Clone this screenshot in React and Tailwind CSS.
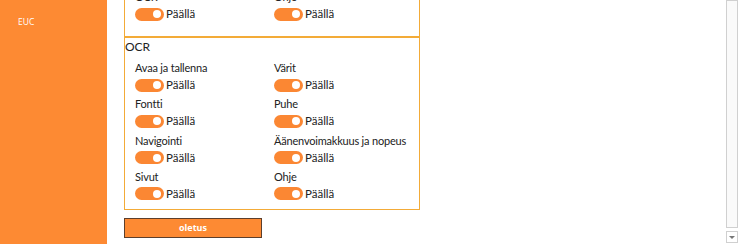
import React from "react";

function Toggle() {
  return (
    <div className="flex items-center h-[16px]">
      <div className="relative w-[29px] h-[13px] rounded-full bg-[#fb8733]">
        <div className="absolute right-[3px] top-[2.5px] w-[8px] h-[8px] rounded-full bg-white" />
      </div>
      <span className="ml-[2px] text-[11.5px] leading-[16px] text-[#222]">Päällä</span>
    </div>
  );
}

function Cell({ label }) {
  return (
    <div className="flex flex-col">
      <div className="h-[16px] leading-[16px] text-[11px] tracking-[-0.2px] text-[#222] whitespace-nowrap">{label}</div>
      <div className="mt-[1px]">
        <Toggle />
      </div>
    </div>
  );
}

export default function App() {
  const rows = [
    ["Avaa ja tallenna", "Värit"],
    ["Fontti", "Puhe"],
    ["Navigointi", "Äänenvoimakkuus ja nopeus"],
    ["Sivut", "Ohje"],
  ];
  return (
    <div className="flex w-[738px] h-[244px] overflow-hidden bg-white font-['Lato',sans-serif]">
      <aside className="w-[107px] shrink-0 bg-[#fd8a33]">
        <div className="pl-[18px] pt-[17px] text-[8.5px] leading-[10px] text-white font-['Open_Sans',sans-serif]">EUC</div>
      </aside>
      <main className="flex-1 pl-[17px] overflow-hidden">
        <div className="w-[296px] -mt-[12px]">
          <div className="border border-[#f3ab38] pl-[10px] pb-[14px]">
            <div className="grid grid-cols-[139px_1fr]">
              <Cell label="OCR" />
              <Cell label="Ohje" />
            </div>
          </div>
          <div className="border border-[#f3ab38] pb-[4px]">
            <div className="pt-[1px] h-[17px] leading-[16px] text-[12px] text-[#222]">OCR</div>
            <div className="mt-[5px] pl-[10px] grid grid-cols-[139px_1fr] auto-rows-[36.33px]">
              {rows.map(([a, b]) => (
                <React.Fragment key={a}>
                  <Cell label={a} />
                  <Cell label={b} />
                </React.Fragment>
              ))}
            </div>
          </div>
          <button className="mt-[8px] w-[138px] h-[20px] bg-[#fd8a33] border border-[#5c3f2c] text-white text-[9px] font-bold leading-[18px] text-center font-['Open_Sans',sans-serif]">
            oletus
          </button>
        </div>
      </main>
      <div className="w-[12px] shrink-0 flex flex-col pb-[1px]">
        <div className="flex-1 border border-[#d0d0d0] bg-[#fafafa]" />
        <div className="mt-[3px] h-[12px] border border-[#d0d0d0] flex items-center justify-center">
          <div className="w-0 h-0 border-l-[3px] border-r-[3px] border-t-[3px] border-l-transparent border-r-transparent border-t-[#777]" />
        </div>
      </div>
    </div>
  );
}
